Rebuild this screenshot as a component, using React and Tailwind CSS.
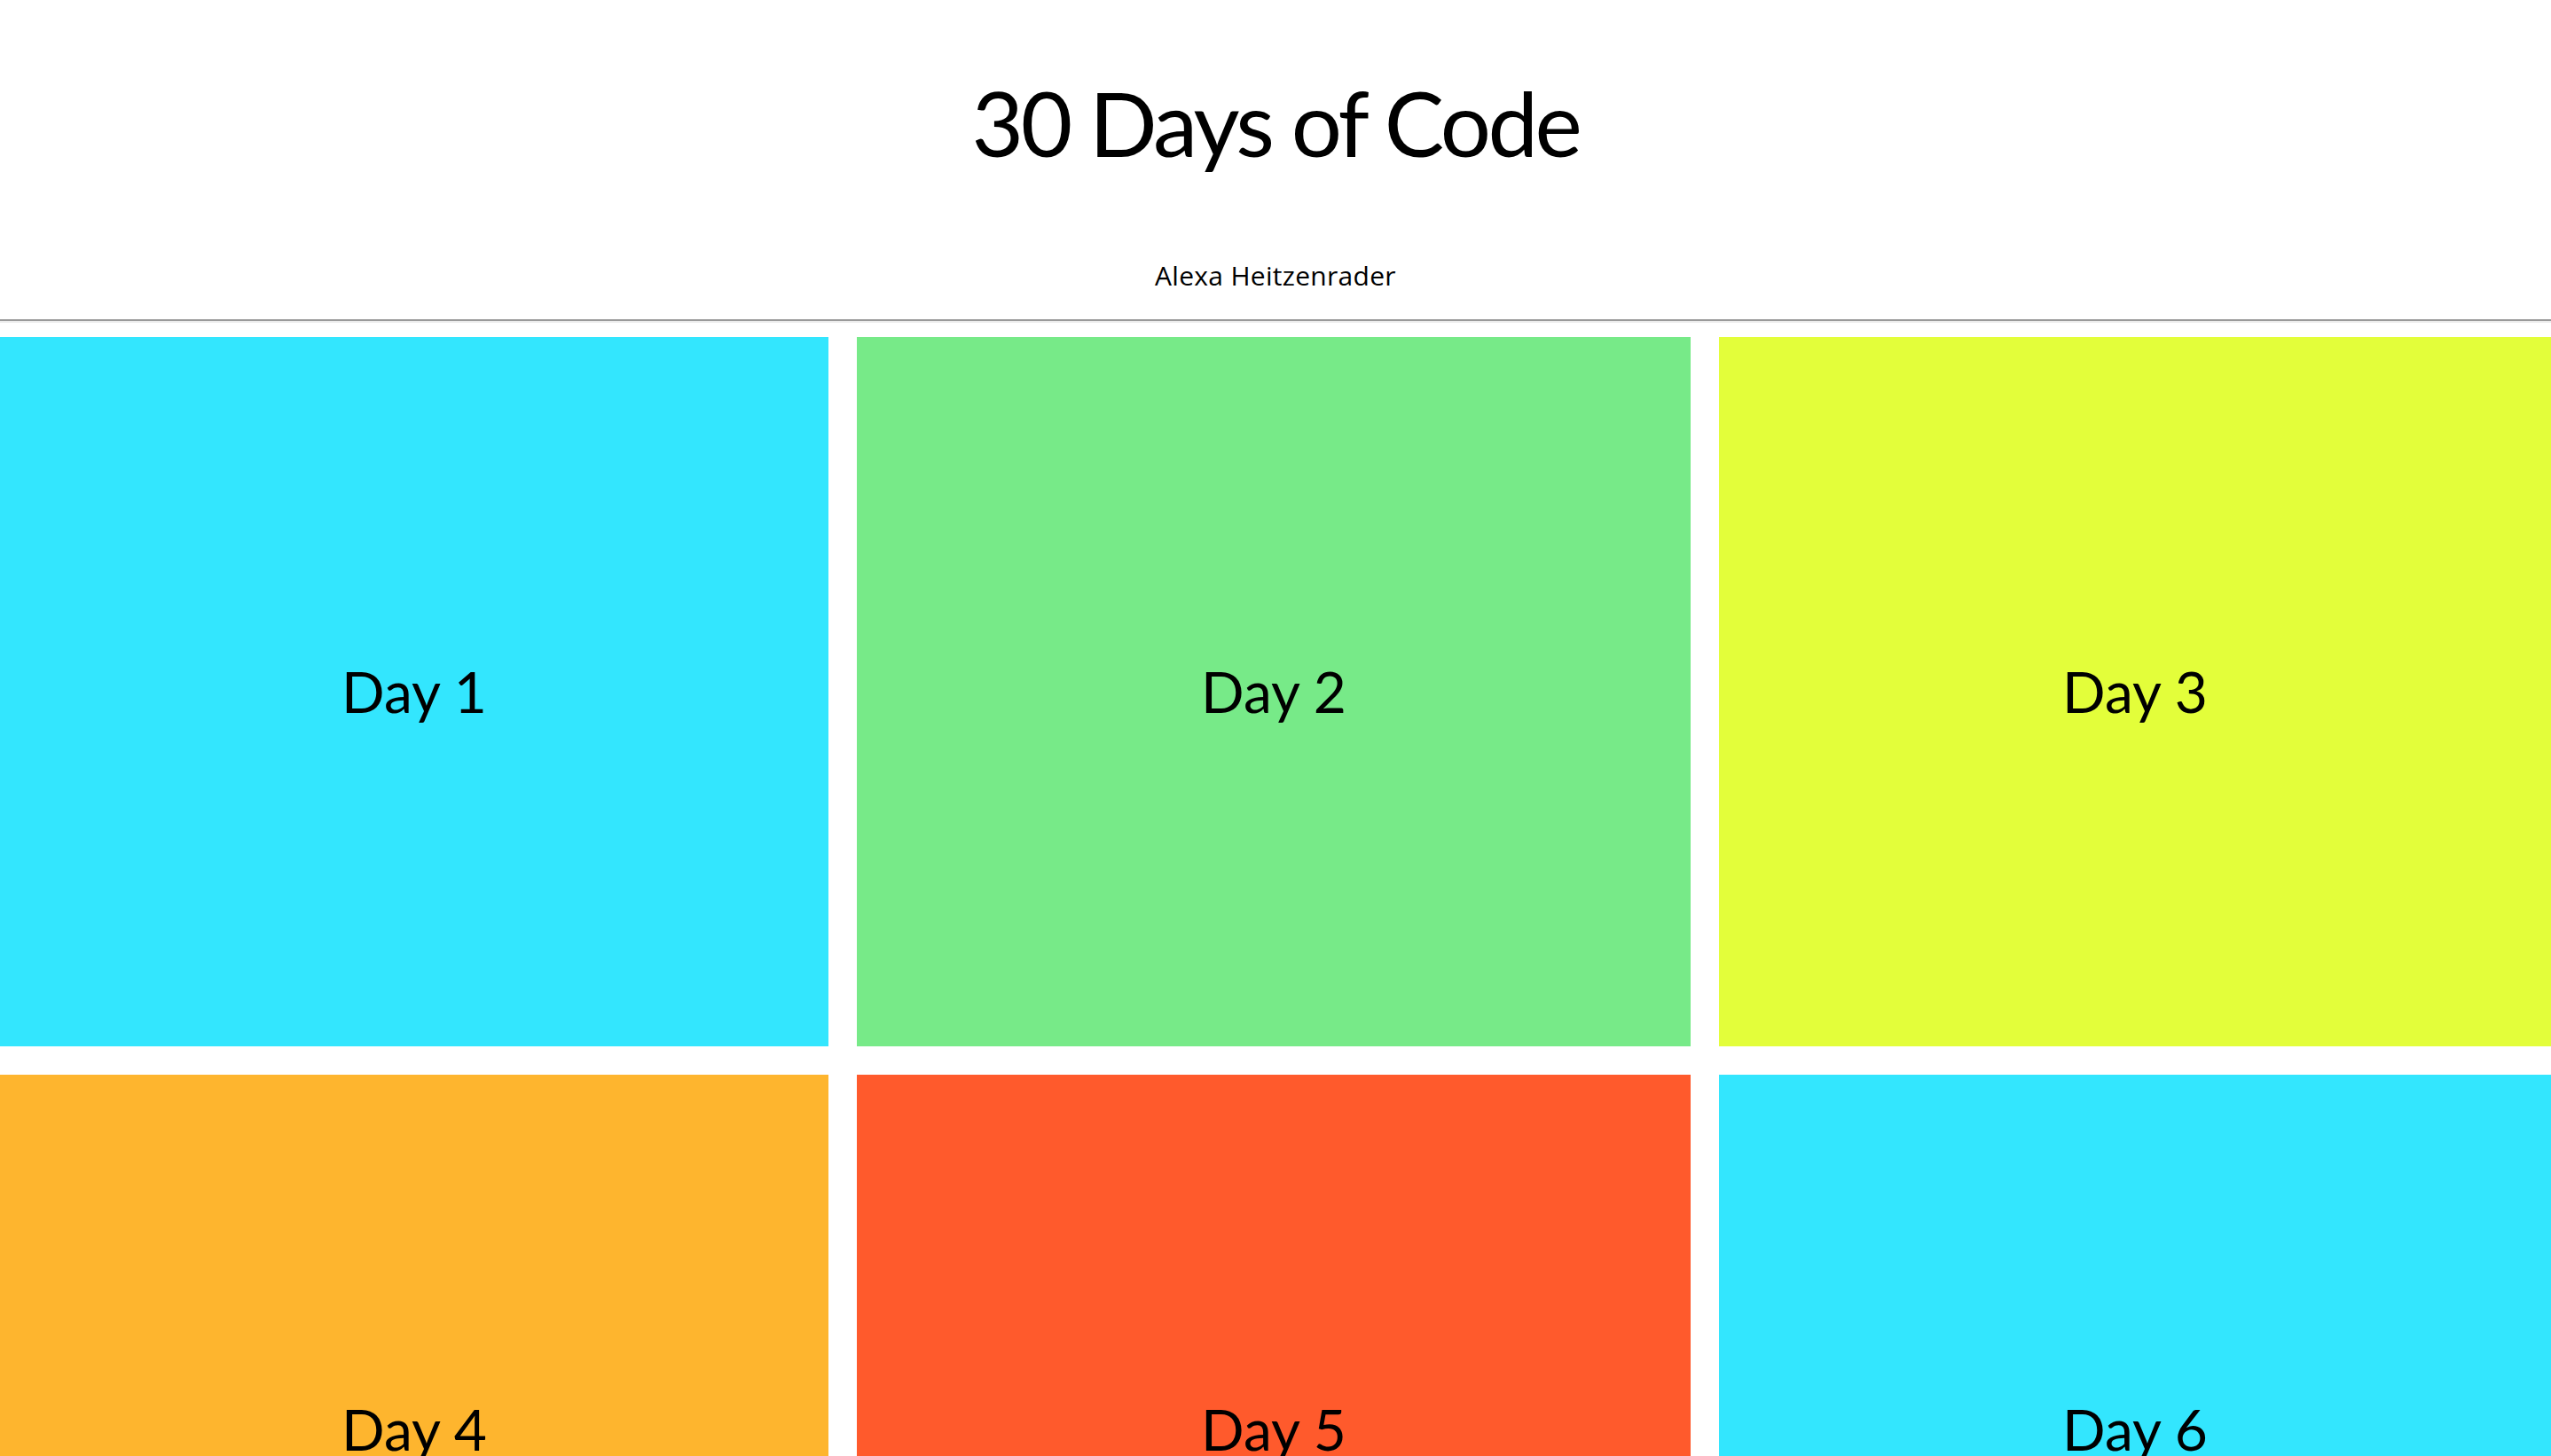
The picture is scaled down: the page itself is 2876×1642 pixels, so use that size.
const colors = ["bg-[#33e6fe]", "bg-[#77ea88]", "bg-[#e3fe3a]", "bg-[#feb52e]", "bg-[#ff5a2c]"];

export default function App() {
  const days = Array.from({ length: 30 }, (_, i) => i + 1);
  return (
    <div className="bg-white min-h-screen">
      <h1
        className="text-center text-[101px] leading-[121px] tracking-[-3.5px] mt-[78px] text-black font-normal"
        style={{ fontFamily: "Lato, 'Open Sans', sans-serif" }}
      >
        30 Days of Code
      </h1>
      <p
        className="text-center text-[30px] leading-[41px] tracking-[0.3px] mt-[91px] text-black"
        style={{ fontFamily: "'Open Sans', 'Noto Sans', sans-serif" }}
      >
        Alexa Heitzenrader
      </p>
      <hr className="mt-[29px] h-0 border-0 border-t-2 border-b-2 border-t-[#9a9a9a] border-b-[#ececec]" />
      <div className="mt-4 grid grid-cols-[934px_940px_938px] gap-8">
        {days.map((d, i) => (
          <div
            key={d}
            className={`${colors[i % 5]} h-[800px] flex items-center justify-center text-[64px] text-black`}
            style={{ fontFamily: "Lato, 'Open Sans', sans-serif" }}
          >
            Day {d}
          </div>
        ))}
      </div>
    </div>
  );
}
